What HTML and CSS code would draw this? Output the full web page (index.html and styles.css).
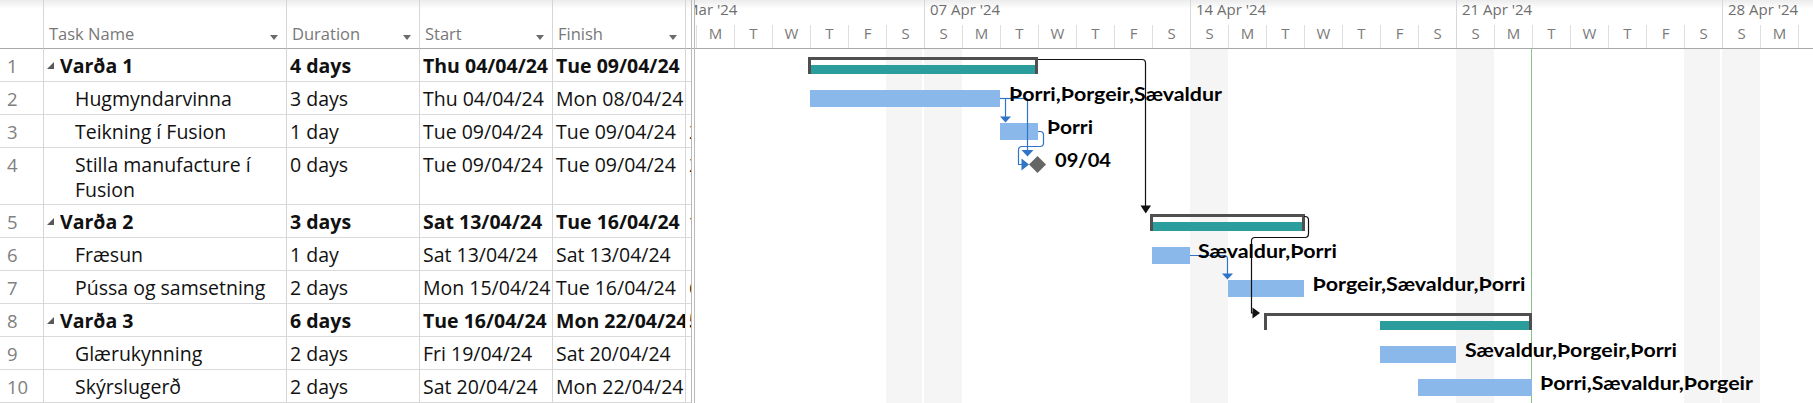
FILE: index.html
```html
<!DOCTYPE html>
<html>
<head>
<meta charset="utf-8">
<link rel="stylesheet" href="styles.css">
</head>
<body>
<div class="app">
  <div class="grid">
    <div class="hdr rn-h"></div>
    <div class="hdr"><span>Task Name</span><i class="dd"></i></div>
    <div class="hdr"><span>Duration</span><i class="dd"></i></div>
    <div class="hdr"><span>Start</span><i class="dd"></i></div>
    <div class="hdr"><span>Finish</span><i class="dd"></i></div>
    <div class="hdr pc"></div>

    <div class="c rn">1</div>
    <div class="c name sum"><i class="tri"></i><span>Varða 1</span></div>
    <div class="c b">4 days</div>
    <div class="c b">Thu 04/04/24</div>
    <div class="c b">Tue 09/04/24</div>
    <div class="c pc"></div>

    <div class="c rn">2</div>
    <div class="c name">Hugmyndarvinna</div>
    <div class="c">3 days</div>
    <div class="c">Thu 04/04/24</div>
    <div class="c">Mon 08/04/24</div>
    <div class="c pc"></div>

    <div class="c rn">3</div>
    <div class="c name">Teikning í Fusion</div>
    <div class="c">1 day</div>
    <div class="c">Tue 09/04/24</div>
    <div class="c">Tue 09/04/24</div>
    <div class="c pc">2</div>

    <div class="c rn">4</div>
    <div class="c name wrap">Stilla manufacture í Fusion</div>
    <div class="c">0 days</div>
    <div class="c">Tue 09/04/24</div>
    <div class="c">Tue 09/04/24</div>
    <div class="c pc">2,3</div>

    <div class="c rn">5</div>
    <div class="c name sum"><i class="tri"></i><span>Varða 2</span></div>
    <div class="c b">3 days</div>
    <div class="c b">Sat 13/04/24</div>
    <div class="c b">Tue 16/04/24</div>
    <div class="c pc b">1</div>

    <div class="c rn">6</div>
    <div class="c name">Fræsun</div>
    <div class="c">1 day</div>
    <div class="c">Sat 13/04/24</div>
    <div class="c">Sat 13/04/24</div>
    <div class="c pc"></div>

    <div class="c rn">7</div>
    <div class="c name">Pússa og samsetning</div>
    <div class="c">2 days</div>
    <div class="c">Mon 15/04/24</div>
    <div class="c">Tue 16/04/24</div>
    <div class="c pc">6</div>

    <div class="c rn">8</div>
    <div class="c name sum"><i class="tri"></i><span>Varða 3</span></div>
    <div class="c b">6 days</div>
    <div class="c b">Tue 16/04/24</div>
    <div class="c b">Mon 22/04/24</div>
    <div class="c pc b">5</div>

    <div class="c rn">9</div>
    <div class="c name">Glærukynning</div>
    <div class="c">2 days</div>
    <div class="c">Fri 19/04/24</div>
    <div class="c">Sat 20/04/24</div>
    <div class="c pc"></div>

    <div class="c rn">10</div>
    <div class="c name">Skýrslugerð</div>
    <div class="c">2 days</div>
    <div class="c">Sat 20/04/24</div>
    <div class="c">Mon 22/04/24</div>
    <div class="c pc"></div>
  </div>

  <div class="split"></div>

  <div class="chart">
    <div class="timescale">
      <div class="weeks">
        <div class="week"><div class="wk">31 Mar '24</div><div class="days"><span>S</span><span>M</span><span>T</span><span>W</span><span>T</span><span>F</span><span>S</span></div></div>
        <div class="week"><div class="wk">07 Apr '24</div><div class="days"><span>S</span><span>M</span><span>T</span><span>W</span><span>T</span><span>F</span><span>S</span></div></div>
        <div class="week"><div class="wk">14 Apr '24</div><div class="days"><span>S</span><span>M</span><span>T</span><span>W</span><span>T</span><span>F</span><span>S</span></div></div>
        <div class="week"><div class="wk">21 Apr '24</div><div class="days"><span>S</span><span>M</span><span>T</span><span>W</span><span>T</span><span>F</span><span>S</span></div></div>
        <div class="week"><div class="wk">28 Apr '24</div><div class="days"><span>S</span><span>M</span><span>T</span><span>W</span><span>T</span><span>F</span><span>S</span></div></div>
        <div class="week"><div class="wk">05 May '24</div><div class="days"><span>S</span><span>M</span><span>T</span><span>W</span><span>T</span><span>F</span><span>S</span></div></div>
      </div>
    </div>

    <svg class="gantt" width="1118" height="354" viewBox="695 49 1118 354" xmlns="http://www.w3.org/2000/svg">
      <g class="shade">
        <rect x="886" y="49" width="36" height="354"/>
        <rect x="924" y="49" width="38" height="354"/>
        <rect x="1190" y="49" width="38" height="354"/>
        <rect x="1456" y="49" width="38" height="354"/>
        <rect x="1684" y="49" width="36" height="354"/>
        <rect x="1722" y="49" width="38" height="354"/>
      </g>
      <line class="today" x1="1531.5" y1="49" x2="1531.5" y2="403"/>

      <!-- summary bars -->
      <g class="bracket">
        <rect x="808" y="57" width="230" height="3"/>
        <rect x="808" y="57" width="3" height="17"/>
        <rect x="1035" y="57" width="3" height="17"/>
        <rect x="1150" y="214" width="155" height="3"/>
        <rect x="1150" y="214" width="3" height="17"/>
        <rect x="1302" y="214" width="3" height="17"/>
        <rect x="1264" y="313" width="268" height="3"/>
        <rect x="1264" y="313" width="3" height="17"/>
        <rect x="1529" y="313" width="3" height="17"/>
      </g>
      <g class="teal">
        <rect x="811" y="65" width="224" height="9"/>
        <rect x="1153" y="222" width="149" height="9"/>
        <rect x="1380" y="321" width="149" height="9"/>
      </g>

      <!-- task bars -->
      <g class="task">
        <rect x="810" y="90" width="190" height="17"/>
        <rect x="1000" y="123" width="38" height="17"/>
        <rect x="1152" y="247" width="38" height="17"/>
        <rect x="1228" y="280" width="76" height="17"/>
        <rect x="1380" y="346" width="76" height="17"/>
        <rect x="1418" y="379" width="114" height="17"/>
      </g>

      <!-- milestone -->
      <polygon class="ms" points="1037.5,156 1046,164.5 1037.5,173 1029,164.5"/>

      <!-- black links -->
      <g class="blink">
        <path d="M1038 59.5 H1142 Q1145.5 59.5 1145.5 63 V206"/>
        <path d="M1304 216.5 H1305 Q1308.5 216.5 1308.5 220 V233.5 Q1308.5 237.5 1305 237.5 H1255 Q1251.5 237.5 1251.5 241 V313 H1254"/>
      </g>
      <g class="barrow">
        <polygon points="1140.5,205.5 1151,205.5 1145.75,213.5"/>
        <polygon points="1252.5,307.5 1252.5,318.5 1260,313"/>
      </g>

      <!-- blue links -->
      <g class="link">
        <path d="M1000 98.5 H1027.5"/>
        <path d="M1005.5 98.5 V117"/>
        <path d="M1027.5 98.5 V151"/>
        <path d="M1038 131.5 H1040 Q1043.5 131.5 1043.5 135 V143 Q1043.5 146.5 1040 146.5 H1022 Q1018.5 146.5 1018.5 150 V164.5 H1022"/>
        <path d="M1190 255.5 H1224 Q1227.5 255.5 1227.5 259 V274"/>
      </g>
      <g class="larrow">
        <polygon points="1000,116.5 1011,116.5 1005.5,122.5"/>
        <polygon points="1021.5,150 1033.5,150 1027.5,156.5"/>
        <polygon points="1021.5,158.5 1021.5,170.5 1029,164.5"/>
        <polygon points="1222,273.5 1233,273.5 1227.5,279.5"/>
      </g>

      <!-- labels -->
      <g class="lbl">
        <text x="1009" y="101" textLength="213" lengthAdjust="spacingAndGlyphs">Þorri,Þorgeir,Sævaldur</text>
        <text x="1047" y="134" textLength="46" lengthAdjust="spacingAndGlyphs">Þorri</text>
        <text x="1055" y="167" textLength="56" lengthAdjust="spacingAndGlyphs">09/04</text>
        <text x="1198" y="257.5" textLength="139" lengthAdjust="spacingAndGlyphs">Sævaldur,Þorri</text>
        <text x="1312.5" y="290.5" textLength="213" lengthAdjust="spacingAndGlyphs">Þorgeir,Sævaldur,Þorri</text>
        <text x="1465" y="356.5" textLength="212" lengthAdjust="spacingAndGlyphs">Sævaldur,Þorgeir,Þorri</text>
        <text x="1540" y="389.5" textLength="213" lengthAdjust="spacingAndGlyphs">Þorri,Sævaldur,Þorgeir</text>
      </g>
    </svg>
  </div>
</div>
</body>
</html>
```

FILE: styles.css
```css
html, body {
  margin: 0;
  padding: 0;
  background: #ffffff;
  overflow: hidden;
}

body {
  font-family: "Open Sans", "Noto Sans", sans-serif;
  color: #111111;
}

.app {
  display: flex;
  width: 1813px;
  height: 403px;
  overflow: hidden;
}

/* ---------- task table ---------- */
.grid {
  flex: none;
  width: 691px;
  display: grid;
  grid-template-columns: 44px 243px 133px 133px 133px 5px;
  align-content: start;
}

.grid > div {
  box-sizing: border-box;
  border-right: 1px solid #d6d6d6;
  border-bottom: 1px solid #dadada;
  overflow: hidden;
  white-space: nowrap;
}

.grid > .pc {
  border-right: none;
}

.hdr {
  height: 49px;
  border-bottom-color: #a8a8a8 !important;
  background: linear-gradient(#ececec, #ffffff 9px);
  font-size: 16.5px;
  line-height: 20px;
  color: #787878;
  padding: 24px 8px 0 5px;
  display: flex;
  justify-content: space-between;
}

.dd {
  flex: none;
  width: 0;
  height: 0;
  border-left: 4.5px solid transparent;
  border-right: 4.5px solid transparent;
  border-top: 5px solid #6b6b6b;
  margin-top: 11px;
}

.c {
  font-size: 19.5px;
  line-height: 25px;
  padding: 3.5px 0 3.5px 3px;
  color: #111111;
}

.b {
  font-weight: 700;
}

.rn {
  color: #808080;
  font-size: 18.5px;
  padding-left: 7px;
}

.name {
  padding-left: 31px;
}

.name.wrap {
  white-space: normal;
}

.name.sum {
  padding-left: 3px;
  display: flex;
  align-items: center;
  gap: 6px;
  font-weight: 700;
}

.tri {
  flex: none;
  width: 0;
  height: 0;
  border-left: 7px solid transparent;
  border-bottom: 7px solid #595959;
  margin-top: 1px;
}

.split {
  flex: none;
  width: 4px;
  box-sizing: border-box;
  border-left: 1px solid #b9b9b9;
  border-right: 1px solid #b9b9b9;
}

/* ---------- chart ---------- */
.chart {
  flex: 1;
  min-width: 0;
  display: flex;
  flex-direction: column;
  overflow: hidden;
}

.timescale {
  flex: none;
  height: 49px;
  box-sizing: border-box;
  border-bottom: 1px solid #a8a8a8;
  background: linear-gradient(#ececec, #ffffff 9px);
  overflow: hidden;
}

.weeks {
  display: flex;
  margin-left: -37px;
}

.week {
  flex: none;
  width: 266px;
  height: 48px;
  box-shadow: inset 1px 0 0 #d8d8d8;
}

.wk {
  height: 25px;
  line-height: 19px;
  padding-left: 6px;
  font-size: 15px;
  color: #6e6e6e;
  white-space: nowrap;
}

.days {
  display: flex;
}

.days span {
  flex: none;
  box-sizing: border-box;
  width: 38px;
  height: 23px;
  border-left: 1px solid #dedede;
  text-align: center;
  font-size: 15px;
  line-height: 16px;
  color: #7a7a7a;
}

.days span:first-child {
  border-left-color: transparent;
}

.gantt {
  display: block;
  flex: none;
}

.shade rect {
  fill: #f5f5f5;
}

.today {
  stroke: #86c486;
  stroke-width: 1;
}

.bracket rect {
  fill: #4f4f4f;
}

.teal rect {
  fill: #2b9d9d;
}

.task rect {
  fill: #8ab8ea;
}

.ms {
  fill: #666666;
}

.blink path {
  fill: none;
  stroke: #111111;
  stroke-width: 1.2;
}

.barrow polygon {
  fill: #111111;
}

.link path {
  fill: none;
  stroke: #2f74c6;
  stroke-width: 1.2;
}

.larrow polygon {
  fill: #2f74c6;
}

.lbl text {
  font-family: "Lato", "Open Sans", sans-serif;
  font-weight: 700;
  font-size: 18.5px;
  fill: #000000;
}
```
